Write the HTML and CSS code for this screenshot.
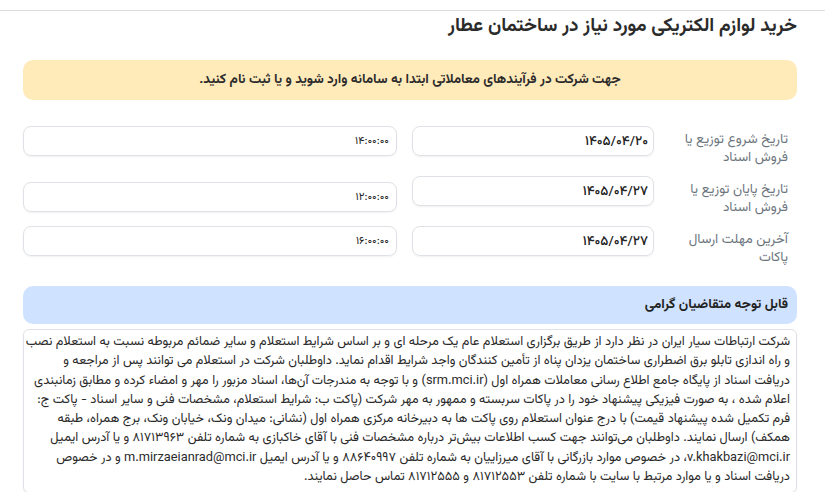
FILE: index.html
```html
<!DOCTYPE html>
<html lang="fa" dir="rtl">
<head>
    <meta charset="UTF-8">
    <meta name="viewport" content="width=device-width, initial-scale=1.0">
    <title>خرید لوازم الکتریکی مورد نیاز در ساختمان عطار</title>
    <link rel="stylesheet" href="styles.css">
</head>
<body>
    <div class="page">
        <h1 class="title">خرید لوازم الکتریکی مورد نیاز در ساختمان عطار</h1>

        <div class="alert">جهت شرکت در فرآیندهای معاملاتی ابتدا به سامانه وارد شوید و یا ثبت نام کنید.</div>

        <div class="schedule">
            <div class="row">
                <div class="label">تاریخ شروع توزیع یا فروش اسناد</div>
                <div class="field date">۱۴۰۵/۰۴/۲۰</div>
                <div class="field time">۱۴:۰۰:۰۰</div>
            </div>
            <div class="row">
                <div class="label">تاریخ پایان توزیع یا فروش اسناد</div>
                <div class="field date">۱۴۰۵/۰۴/۲۷</div>
                <div class="field time shifted">۱۲:۰۰:۰۰</div>
            </div>
            <div class="row">
                <div class="label">آخرین مهلت ارسال پاکات</div>
                <div class="field date">۱۴۰۵/۰۴/۲۷</div>
                <div class="field time">۱۶:۰۰:۰۰</div>
            </div>
        </div>

        <div class="notice">
            <div class="notice-head">قابل توجه متقاضیان گرامی</div>
            <div class="notice-body">شرکت ارتباطات سیار ایران در نظر دارد از طریق برگزاری استعلام عام یک مرحله ای و بر اساس شرایط استعلام و سایر ضمائم مربوطه نسبت به استعلام نصب<br>
و راه اندازی تابلو برق اضطراری ساختمان یزدان پناه از تأمین کنندگان واجد شرایط اقدام نماید. داوطلبان شرکت در استعلام می توانند پس از مراجعه و<br>
دریافت اسناد از پایگاه جامع اطلاع رسانی معاملات همراه اول (srm.mci.ir) و با توجه به مندرجات آن‌ها، اسناد مزبور را مهر و امضاء کرده و مطابق زمانبندی<br>
اعلام شده ، به صورت فیزیکی پیشنهاد خود را در پاکات سربسته و ممهور به مهر شرکت (پاکت ب: شرایط استعلام، مشخصات فنی و سایر اسناد - پاکت ج:<br>
فرم تکمیل شده پیشنهاد قیمت) با درج عنوان استعلام روی پاکت ها به دبیرخانه مرکزی همراه اول (نشانی: میدان ونک، خیابان ونک، برج همراه، طبقه<br>
همکف) ارسال نمایند. داوطلبان می‌توانند جهت کسب اطلاعات بیش‌تر درباره مشخصات فنی با آقای خاکبازی به شماره تلفن ۸۱۷۱۳۹۶۳ و یا آدرس ایمیل<br>
v.khakbazi@mci.ir، در خصوص موارد بازرگانی با آقای میرزاییان به شماره تلفن ۸۸۶۴۰۹۹۷ و یا آدرس ایمیل m.mirzaeianrad@mci.ir و در خصوص<br>
دریافت اسناد و یا موارد مرتبط با سایت با شماره تلفن ۸۱۷۱۲۵۵۳ و ۸۱۷۱۲۵۵۵ تماس حاصل نمایند.</div>
        </div>
    </div>
</body>
</html>
```

FILE: styles.css
```css
body {
    margin: 0;
    font-family: "Vazirmatn", "Noto Sans Arabic", "DejaVu Sans", sans-serif;
    background-color: #fff;
    color: #212529;
}

.page {
    border-top: 1px solid #ddd;
    margin-top: 10px;
    padding: 0 28px 0 23px;
}

.title {
    margin: 0;
    padding: 2px 0 0 0;
    font-size: 19px;
    font-weight: bold;
    line-height: 28px;
    color: #2b2b2b;
}

.alert {
    margin-top: 19px;
    height: 40px;
    line-height: 40px;
    text-align: center;
    font-size: 13.5px;
    font-weight: bold;
    background-color: #ffeaba;
    border-radius: 10px;
    color: #2b2b2b;
}

.schedule {
    margin-top: 26px;
}

.row {
    display: grid;
    grid-template-columns: 128px 242px 1fr;
    column-gap: 15px;
    height: 50px;
    align-items: start;
}

.row .label {
    padding: 5px 9px 0 0;
    font-size: 13.5px;
    line-height: 18px;
    color: #6c757d;
}

.field {
    height: 30px;
    line-height: 30px;
    padding: 0 5px;
    border: 1px solid #dee2e6;
    border-radius: 8px;
    box-shadow: 0 1px 2px rgba(0, 0, 0, 0.06);
    box-sizing: border-box;
    color: #222;
}

.field.date {
    font-size: 13.5px;
    font-weight: 500;
}

.field.time {
    font-size: 11px;
    padding-right: 7px;
}

.field.shifted {
    margin-top: 6px;
}

.notice {
    margin-top: 10px;
}

.notice-head {
    height: 38px;
    line-height: 38px;
    padding-right: 9px;
    background-color: #cfe2ff;
    border-radius: 10px;
    font-size: 13.5px;
    font-weight: bold;
    color: #222;
}

.notice-body {
    margin-top: 5px;
    padding: 3px 6px 5px 6px;
    border: 1px solid #dee2e6;
    border-radius: 6px;
    box-shadow: 0 1px 2px rgba(0, 0, 0, 0.06);
    font-size: 12.8px;
    line-height: 19.3px;
    white-space: nowrap;
    overflow: hidden;
    color: #2a2a2a;
}
```
